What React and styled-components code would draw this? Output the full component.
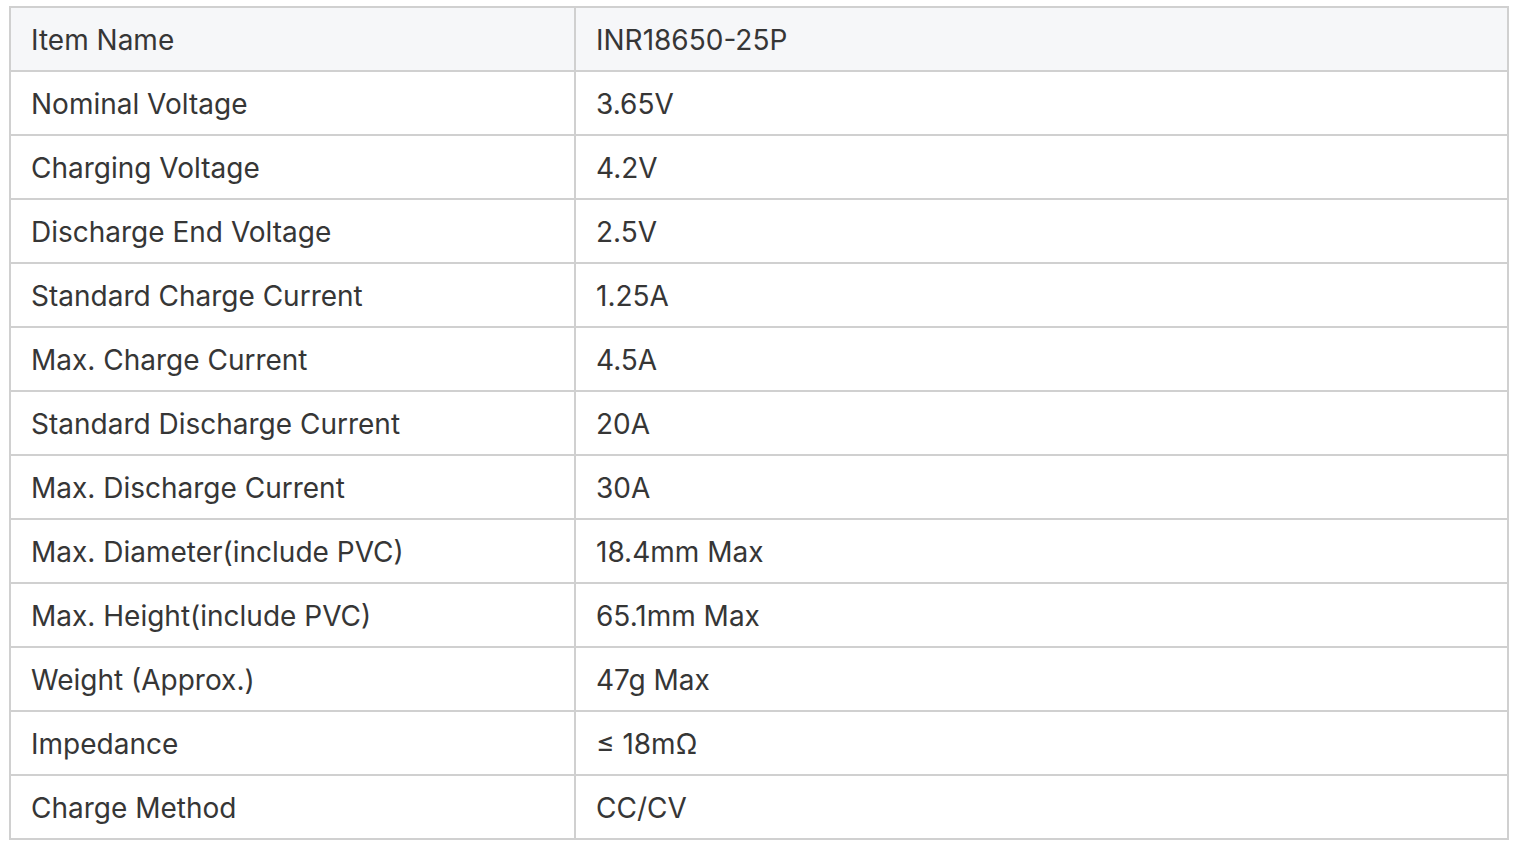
import styled, { createGlobalStyle } from "styled-components";

const GlobalStyle = createGlobalStyle`
  body {
    margin: 0;
    background: #ffffff;
    font-family: 'Inter', 'Liberation Sans', sans-serif;
  }
`;

const specs = [
  ["Nominal Voltage", "3.65V"],
  ["Charging Voltage", "4.2V"],
  ["Discharge End Voltage", "2.5V"],
  ["Standard Charge Current", "1.25A"],
  ["Max. Charge Current", "4.5A"],
  ["Standard Discharge Current", "20A"],
  ["Max. Discharge Current", "30A"],
  ["Max. Diameter(include PVC)", "18.4mm Max"],
  ["Max. Height(include PVC)", "65.1mm Max"],
  ["Weight (Approx.)", "47g Max"],
  ["Impedance", "≤ 18mΩ"],
  ["Charge Method", "CC/CV"],
];

export default function App() {
  return (
    <Page>
      <GlobalStyle />
      <SpecTable>
        <thead>
          <Row $head>
            <Cell $first>Item Name</Cell>
            <Cell>INR18650-25P</Cell>
          </Row>
        </thead>
        <tbody>
          {specs.map(([name, value]) => (
            <Row key={name}>
              <Cell $first>{name}</Cell>
              <Cell>{value}</Cell>
            </Row>
          ))}
        </tbody>
      </SpecTable>
    </Page>
  );
}

const Page = styled.div`
  padding: 6px 0 0 9px;
`;

const SpecTable = styled.table`
  width: 1500px;
  border-collapse: collapse;
  border: 2px solid #d0d0d0;
`;

const Row = styled.tr`
  height: 64px;
  background: ${(p) => (p.$head ? "#f6f7f9" : "#ffffff")};
`;

const Cell = styled.td`
  width: ${(p) => (p.$first ? "523px" : "auto")};
  padding: 2px 20px 0;
  border: 2px solid #d0d0d0;
  color: #363636;
  font-size: 28px;
  font-weight: 400;
  text-align: left;
  vertical-align: middle;
  white-space: nowrap;
`;
